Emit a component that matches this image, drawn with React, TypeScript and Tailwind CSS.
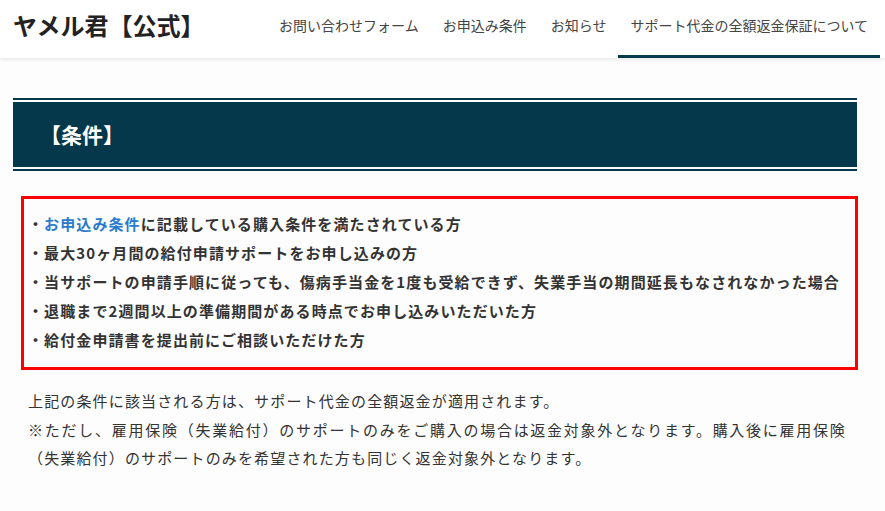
import React from "react";

const font = { fontFamily: '"Noto Sans CJK JP", "Noto Sans", sans-serif' };

export default function App() {
  const nav = ["お問い合わせフォーム", "お申込み条件", "お知らせ", "サポート代金の全額返金保証について"];
  return (
    <div className="w-[885px] h-[511px] bg-[#fdfdfd] text-[#333] overflow-hidden" style={font}>
      <header className="h-[58px] bg-white flex items-stretch justify-between pr-[5px] shadow-[0_2px_3px_rgba(0,0,0,0.08)] relative z-10">
        <div className="flex items-center pl-[13px] pb-[8px] text-[24px] font-bold text-[#222] leading-none">
          ヤメル君【公式】
        </div>
        <nav className="flex items-stretch">
          {nav.map((n, i) => (
            <div
              key={n}
              className={
                i === 3
                  ? "flex items-center px-3 pb-[5px] border-b-[3px] border-[#05394c] text-[14px] text-[#444]"
                  : "flex items-center px-3 pb-[5px] border-b-[3px] border-transparent text-[14px] text-[#444]"
              }
            >
              {n}
            </div>
          ))}
        </nav>
      </header>
      <main className="w-[844px] ml-[13px] pt-[40px]">
        <div className="border-y-2 border-[#05394c] py-[2px]">
          <div className="h-[65px] bg-[#05384b] flex items-center pl-[27px] text-white text-[21px] font-bold">
            【条件】
          </div>
        </div>
        <div className="mt-[25px] ml-[8px] mr-[-1px] border-[3px] border-[#ff0000] pt-[10px] pb-[13px] pl-[4px] text-[15px] font-bold leading-[29px] tracking-[1.1px] text-[#333]">
          <div>
            ・<span className="text-[#2b7bcc]">お申込み条件</span>に記載している購入条件を満たされている方
          </div>
          <div>・最大30ヶ月間の給付申請サポートをお申し込みの方</div>
          <div>・当サポートの申請手順に従っても、傷病手当金を1度も受給できず、失業手当の期間延長もなされなかった場合</div>
          <div>・退職まで2週間以上の準備期間がある時点でお申し込みいただいた方</div>
          <div>・給付金申請書を提出前にご相談いただけた方</div>
        </div>
        <div className="mt-[17px] pl-[15px] pr-[11px] text-[15px] leading-[28.5px] tracking-[1.15px] text-[#333] text-justify">
          <p>上記の条件に該当される方は、サポート代金の全額返金が適用されます。</p>
          <p>
            ※ただし、雇用保険（失業給付）のサポートのみをご購入の場合は返金対象外となります。購入後に雇用保険（失業給付）のサポートのみを希望された方も同じく返金対象外となります。
          </p>
        </div>
      </main>
    </div>
  );
}
